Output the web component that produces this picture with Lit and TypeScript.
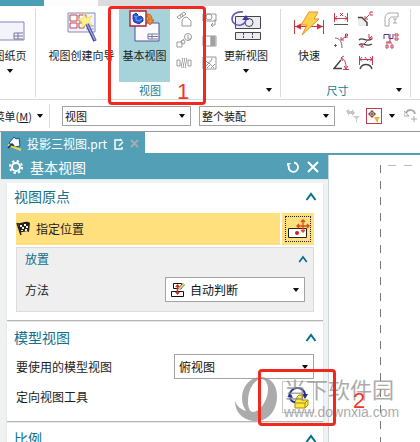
import { LitElement, html, css, svg, nothing } from "lit";
import { customElement, property } from "lit/decorators.js";

const caret = html`<svg class="caret" viewBox="0 0 6 4" width="6" height="4" aria-hidden="true"><path d="M0 0h6L3.5 3.5h-1z" fill="#111" /></svg>`;
const chevron = html`<svg viewBox="0 0 12 9" width="12" height="9" aria-hidden="true"><path d="M1.5 8L6 2l4.500 6" fill="none" stroke="#08708a" stroke-width="2" /></svg>`;

const small = (label: string, body: unknown) => html`<button class="small" aria-label=${label}>
  <svg viewBox="0 0 16 16" width="16" height="16" fill="none">${body}</svg>
</button>`;

const sheetIcon = html`<svg viewBox="0 0 34 32" width="34" height="32" fill="none">
  <path d="M2 12h29v18H2z" fill="#f3f3fc" stroke="#8585bd" />
  <path d="M21 23h9M21 26h9M21 23v6M25 23v6M21 29h9" stroke="#77779b" />
</svg>`;

const wizardIcon = html`<svg viewBox="0 0 30 34" width="30" height="34" fill="none">
  <path d="M1 3h27v19H1z" fill="#f1f2fb" stroke="#8a8ab8" />
  <path d="M3 5h7v6H3zM12 5h7v6h-7zM3 13h7v5H3zM12 13h5v5h-5z" fill="#fff" stroke="#c54450" />
  <path d="M19 16h8M19 19h8M22 16v5" stroke="#9c9cc8" />
  <path d="M17 3l2 5 6-2-3 5 3 4-6-1-4 4 0-6-4-3 5-1z" fill="#fbf28c" stroke="#e7d75c" stroke-width=".6" />
  <path d="M20 14l8 17" stroke="#494b98" stroke-width="3.600" />
  <path d="M20 14l8 16" stroke="#a4a7df" stroke-width="1.400" />
</svg>`;

const baseViewIcon = html`<svg viewBox="0 0 34 34" width="34" height="34" fill="none">
  <path d="M7 13h24v18H7z" fill="#fbfbff" stroke="#504f9d" />
  <path d="M20 24h10M20 26.500h10M20 29h10M20 24v5M24 24v5" stroke="#77779b" />
  <path d="M2 1h16v15H2z" fill="#fff" stroke="#b51d35" stroke-width="1.400" />
  <path d="M5 5l3-2 2 2v2l3-1 2 2v3l-4 3-5-2-1-3z" fill="#2859d8" stroke="#10267d" stroke-width=".8" />
  <path d="M6 6l2 1v3l3 1 3-2M8 7l2-1" stroke="#8fb4ff" stroke-width=".8" />
  <path d="M19 4c4 0 5 2 5 6h2l-4 5-4-5h3c0-2-1-3-2-3z" fill="#f18c2a" stroke="#b4480b" stroke-width=".7" />
</svg>`;

const updateIcon = html`<svg viewBox="0 0 32 32" width="32" height="32" fill="none">
  <path d="M5.500 6.500h25v12h-25zM5.500 22.500h25v7h-25z" fill="#ececf0" stroke="#44444c" />
  <circle cx="19" cy="12.500" r="4" stroke="#44444c" />
  <path d="M13.500 23v7M22.500 23v7" stroke="#44444c" stroke-dasharray="2 1" />
  <path d="M13 2C6 1 2 5 2 9s4 7 9 6c3-1 5-3 5-6" stroke="#6259bd" stroke-width="1.600" />
  <path d="M12 10l4-5 3 5z" fill="#4038a5" />
</svg>`;

const rapidIcon = html`<svg viewBox="0 0 32 32" width="32" height="32" fill="none">
  <path d="M1.500 10v14M30.500 10v14M2 16.500h28" stroke="#c43b48" />
  <path d="M2 16.500l6-3v6zM30 16.500l-6-3v6z" fill="#c92f3d" />
  <path d="M16 2h9l-4 7h5L9 25l5-10h-6z" fill="#ffd34c" stroke="#e88d2b" />
</svg>`;

const G = "#999";
const viewTools = [
  small("投影视图", svg`<path d="M1 6l7-5 2 2-7 5zM6 15v-4c0-3 2-5 5-5l4 4v5z" stroke=${G} /><path d="M4 4l1 2M6 3l1 2" stroke=${G} />`),
  small("局部放大", svg`<path d="M2 3h13v7H2zM4 1v4" stroke=${G} /><circle cx="8" cy="6" r="3" stroke=${G} /><path d="M14 8v6h-4M12 12l-2 2 2 2" stroke=${G} />`),
  small("剖视图", svg`<circle cx="12" cy="4" r="3.500" stroke=${G} /><path d="M1 9h5v5H1zM5 9l3-3M12 2v4h3" stroke=${G} /><circle cx="7" cy="9" r="2" stroke=${G} />`),
  small("断面图", svg`<path d="M2 3h13v10H2z" stroke=${G} /><path d="M9 3h6v10H9z" fill="#bbb" /><path d="M11 3v10M13 3v10" stroke="#888" />`),
  small("断开视图", svg`<path d="M1 5h3v6H1zM12 5h3v6h-3zM6 3c2 3-2 6 0 10M10 3c2 3-2 6 0 10M8 3c2 3-2 6 0 10" stroke=${G} />`),
  small("局部剖", svg`<path d="M2 2h13v12H2z" stroke=${G} /><path d="M3 4l4 4 3-2 1-3M4 12l4-4 5 5M6 13l4-4M10 13l4-4" stroke=${G} />`),
];

const R = "#c43b50";
const sizeTools = [
  small("线性尺寸", svg`<path d="M1.500 2v9M14.500 2v9M2 7.500h12M4 5L2 7.500l2 2M12 5l2 2.500-2 2M7 2l3 3M10 2L7 5" stroke=${R} /><path d="M1 13.500h14" stroke="#555" />`),
  small("倒斜角", svg`<path d="M0 7h5l5 5v3H0z" fill="#ececec" /><path d="M0 6.500h4l5 5V15" stroke="#444" stroke-width="1.400" /><path d="M7 8l4-4M7 5v3h3M15 1h-3v3h3" stroke=${R} />`),
  small("厚度", svg`<path d="M2 15V7c0-3 2-5 5-5h8v4H8L6 8v7z" stroke="#aaa" /><path d="M10 8h4M12 8v4M10 12h4" stroke="#aaa" />`),
  small("径向", svg`<path d="M2 5c4 0 7 3 7 10M1 12.500h3M2.500 11v3" stroke="#666" /><path d="M8 7l4-3M8 4v3h3M12.500 5V1h2v2h-2l2 2" stroke=${R} />`),
  small("坐标", svg`<path d="M1 7c4-4 6 3 13-1M1 12c4-4 6 3 13-1" stroke="#444" stroke-width="1.300" /><path d="M3 14L14 3M3 11v3h3M11 1v4h4" stroke=${R} />`),
  small("周长", svg`<path d="M1 6V1.500h5v4h4V1" stroke="#4b3e91" /><path d="M7 1v8M3 9h5M12 1h3v2h-3zM12 5h3v2h-3zM3 12h2v3H3zM8 12h2v3H8zM3 10h6" stroke=${R} />`),
  small("角度", svg`<path d="M8 5L1 13.500h8" stroke="#444" stroke-width="1.400" /><path d="M8 3c4 1 5 5 5 10M11 1L8 3l2 3M10 14.500h6M11 11l2 3 2-3" stroke=${R} />`),
  small("弧长", svg`<path d="M1.500 1v9M14.500 1v9M2 4.500h12M4 2L2 4.500l2 2M12 2l2 2.500-2 2M7 2l3 4" stroke=${R} /><path d="M2 14c2-6 10-6 12 0" stroke="#444" stroke-width="1.400" />`),
];

@customElement("drop-field")
export class DropField extends LitElement {
  @property() label = "";
  @property() value = "";
  @property({ type: Boolean }) glyph = false;
  @property({ type: Boolean }) large = false;

  static styles = css`
    :host { display: block; min-width: 0; }
    .field { display: grid; align-items: center; height: 20px; font-size: 11px; }
    .field.large { height: 25px; font-size: 12px; }
    .field > * { grid-area: 1 / 1; }
    select {
      appearance: none; width: 100%; height: 100%; margin: 0; padding: 0 16px 0 2px;
      border: 1px solid #a3a3a3; border-radius: 0; background: #fff; color: #111;
      font: inherit; box-sizing: border-box;
    }
    .large select { padding-left: 4px; }
    .glyph select { padding-left: 24px; }
    .caret { justify-self: end; margin-right: 6px; pointer-events: none; }
    .picture { margin-left: 5px; pointer-events: none; }
  `;

  render() {
    return html`<div class="field ${this.large ? "large" : ""} ${this.glyph ? "glyph" : ""}">
      <select aria-label=${this.label}><option>${this.value}</option></select>
      ${this.glyph
        ? html`<svg class="picture" viewBox="0 0 16 16" width="16" height="16" fill="none">
            <path d="M3.500 1.500h8v5h-8zM1.500 9.500h12v5h-12z" fill="#fff" stroke="#111" />
            <path d="M7.500 3v9" stroke="#d52a2a" stroke-width="1.600" />
            <path d="M5 5l2.500-3L10 5zM5 10l2.500 3 2.500-3z" fill="#d52a2a" />
            <path d="M9 7l5-5" stroke="#777" stroke-width="3" /><path d="M9 7l5-5" stroke="#f4e34b" stroke-width="1.500" />
          </svg>`
        : nothing}
      ${caret}
    </div>`;
  }
}

@customElement("app-root")
export class AppRoot extends LitElement {
  static styles = css`
    * { box-sizing: border-box; }
    :host {
      display: flex; flex-direction: column; position: relative; height: 100vh; overflow: hidden;
      background: #fff; color: #1c1c1c;
      font-family: "Noto Sans CJK SC", "Noto Sans", sans-serif; font-size: 12px; line-height: 16px;
    }
    button { margin: 0; padding: 0; border: 0; background: none; color: inherit; font: inherit; }
    svg { display: block; flex: none; }
    h2, h3 { margin: 0; font-weight: 400; }

    .strip { display: flex; height: 6px; flex: none; background: #dcdcdc; }
    .strip .on { width: 44px; background: #4a9fb8; }
    .strip .open { width: 54px; background: #fdfdfd; }

    .ribbon { display: flex; flex: none; height: 94px; padding: 3px 0 2px; border-bottom: 1px solid #d9d9d9; font-size: 11px; }
    .group { display: flex; flex-direction: column; flex: none; border-right: 1px solid #dadada; }
    .group.sheet { width: 36px; overflow: hidden; align-items: flex-end; padding-right: 8px; }
    .group.view { width: 245px; }
    .group.size { width: 130px; }
    .tools { display: flex; height: 73px; }
    .view .tools { padding-left: 8px; }
    .size .tools { padding-left: 8px; }
    .big { display: flex; flex-direction: column; align-items: center; gap: 3px; height: 73px; padding-top: 1px; white-space: nowrap; line-height: 16px; flex: none; }
    .big .art { display: flex; align-items: flex-start; justify-content: center; height: 34px; }
    .big .caret { margin-top: 3px; }
    .wizard { width: 75px; }
    .base { width: 51px; background: #a6d3da; }
    .update { width: 52px; }
    .rapid { width: 40px; }
    .grid { display: grid; grid-auto-rows: 16px; row-gap: 6px; padding-top: 2px; align-content: start; }
    .view .grid { grid-template-columns: 16px 16px; column-gap: 9px; margin: 0 3px 0 6px; }
    .size .grid { grid-template-columns: repeat(3, 16px); column-gap: 9px; margin-left: 4px; }
    .small { width: 16px; height: 16px; }
    .foot { display: grid; grid-template-columns: 1fr auto 1fr; align-items: center; height: 16px; padding-right: 8px; color: #137c96; }
    .foot .name { grid-column: 2; padding-right: 8px; }
    .foot .caret { justify-self: end; }

    .bar { display: flex; align-items: center; flex: none; height: 32px; border-bottom: 1px solid #979797; font-size: 11px; }
    .menu { display: flex; align-items: center; justify-content: flex-end; gap: 5px; width: 50px; height: 24px; padding-right: 6px; border-right: 1px solid #dadada; white-space: nowrap; flex: none; }
    .bar .scope { width: 133px; margin-left: 12px; }
    .bar .assembly { width: 140px; margin-left: 8px; }
    .bar .filters { display: flex; align-items: center; gap: 5px; margin-left: 10px; }
    .snap { border: 1px solid #bd3a50; }
    .filters .caret { margin: 0 4px 0 2px; }

    .tabs { display: flex; flex: none; height: 23px; border-bottom: 2px solid #529fb6; }
    .tab { display: flex; align-items: center; width: 145px; height: 23px; padding-left: 6px; background: #529fb6; color: #fff; border-left: 1px solid #e8eef0; }
    .tab .title { margin-left: 4px; margin-right: 7px; white-space: nowrap; }
    .tab .shut { margin-left: 6px; }

    .work { display: flex; flex: 1; min-height: 0; }
    .panel { display: flex; flex-direction: column; flex: 0 1 329px; min-width: 0; overflow: hidden; border-right: 1px solid #cbd5d9; background: #f0f1f1; }
    .head { display: flex; align-items: center; flex: none; height: 24px; padding: 0 8px; background: #529fb6; color: #fff; border-left: 1px solid #e8eef0; }
    .head h2 { flex: 1; margin-left: 7px; font-size: 14px; line-height: 20px; }
    .head .pair { display: flex; gap: 6px; }
    .cards { display: flex; flex-direction: column; gap: 2px; flex: none; padding: 3px 5px 0 7px; border-top: 1px solid #d9edf6; }
    .card { padding: 0 9px; background: #fff; box-shadow: 0 1px 1px #b5b5b5; }
    .card .top { display: flex; align-items: center; justify-content: space-between; height: 30px; margin: 0 -3px 0 -2px; color: #11708b; }
    .card .top h3 { font-size: 14px; line-height: 20px; }
    .origin { padding-bottom: 8px; }
    .origin .top { padding-bottom: 4px; }
    .pick { display: flex; gap: 2px; height: 32px; }
    .pick .bar-label { display: flex; align-items: center; gap: 6px; flex: 1; background: #ffe07c; }
    .pick .spot { width: 32px; background: #ffe07c; padding: 3px; }
    .spot .ring { display: grid; place-items: center; height: 26px; border: 1px dotted #222; }
    .place { margin-top: 2px; padding: 0 8px; height: 65px; border: 1px solid #dcdcdc; background: #efefef; }
    .place .sub { display: flex; align-items: center; justify-content: space-between; height: 22px; margin-right: -3px; color: #11708b; }
    .place .sub h3 { font-size: 12px; }
    .row { display: flex; align-items: center; justify-content: space-between; height: 25px; white-space: nowrap; }
    .place .row { margin-top: 7px; }
    .row drop-field { flex: 0 1 140px; }
    .model .row { margin-top: 2px; }
    .model .row + .row { height: 32px; }
    .model { padding-bottom: 8px; }
    .orient { width: 32px; height: 32px; border: 1px solid #c9c9c9; display: grid; place-items: center; }

    .sheet-area { flex: 1; display: grid; padding: 10px 0 0 51px; }
    .page {
      background:
        repeating-linear-gradient(to bottom, #777 0 8px, transparent 8px 16px) 0 0 / 1px 100% no-repeat,
        repeating-linear-gradient(to right, #bbb 0 8px, transparent 8px 16px) 8px 0 / 100% 1px no-repeat;
    }

    .mark { position: absolute; border: 3px solid #f2281e; border-radius: 4px; pointer-events: none; }
    .mark.one { left: 108px; top: 6px; width: 98px; height: 99px; }
    .mark.two { left: 258px; top: 369px; width: 78px; height: 57px; }
    .num { position: absolute; color: #f5362b; font-family: "Liberation Sans", sans-serif; font-size: 22px; line-height: 22px; }
    .num.one { left: 177px; top: 81px; }
    .num.two { left: 353px; top: 390px; }
    .credit { position: absolute; left: 234px; top: 376px; display: flex; align-items: flex-start; gap: 6px; color: #8c8c8c; opacity: .72; pointer-events: none; white-space: nowrap; }
    .credit .site { font-size: 22px; line-height: 24px; }
    .credit .url { font-family: "Liberation Sans", sans-serif; font-size: 14px; line-height: 24px; }
  `;

  render() {
    return html`
      <div class="strip"><span class="on"></span><span class="open"></span></div>

      <div class="ribbon">
        <section class="group sheet">
          <button class="big"><span class="art">${sheetIcon}</span>图纸页${caret}</button>
        </section>
        <section class="group view">
          <div class="tools">
            <button class="big wizard"><span class="art">${wizardIcon}</span>视图创建向导</button>
            <button class="big base"><span class="art">${baseViewIcon}</span>基本视图</button>
            <div class="grid">${viewTools}</div>
            <button class="big update"><span class="art">${updateIcon}</span>更新视图${caret}</button>
          </div>
          <div class="foot"><span class="name">视图</span>${caret}</div>
        </section>
        <section class="group size">
          <div class="tools">
            <button class="big rapid"><span class="art">${rapidIcon}</span>快速</button>
            <div class="grid">${sizeTools}</div>
          </div>
          <div class="foot"><span class="name">尺寸</span>${caret}</div>
        </section>
      </div>

      <div class="bar">
        <button class="menu"><span>菜单(<u>M</u>)</span>${caret}</button>
        <drop-field class="scope" label="类型过滤器" value="视图"></drop-field>
        <drop-field class="assembly" label="选择范围" value="整个装配"></drop-field>
        <div class="filters">
          <button aria-label="重置过滤器">
            <svg viewBox="0 0 16 16" width="16" height="16"><path d="M1 3l3-2v2h3V1l3 4-3 3V6H4v2z" fill="#c6c6c6" /><path d="M8 8h7l-3 3v4l-1-1v-3z" fill="#ccc" /></svg>
          </button>
          <button class="snap" aria-label="捕捉过滤器">
            <svg viewBox="0 0 14 14" width="14" height="14" fill="none"><circle cx="5" cy="5" r="2.500" stroke="#7a4038" /><path d="M5 1v8M1 5h8" stroke="#7a4038" /><path d="M7 8h6l-2 3v3l-2-2z" fill="#f2b233" /></svg>
          </button>
          ${caret}
          <button aria-label="撤销选择">
            <svg viewBox="0 0 16 16" width="16" height="16" fill="none"><path d="M2 5c2-4 8-4 9 1" stroke="#aaa" stroke-width="2" /><path d="M0 3v5h5zM7 11h6M10 8v6" stroke="#aaa" /></svg>
          </button>
        </div>
      </div>

      <div class="tabs">
        <div class="tab">
          <svg viewBox="0 0 16 16" width="16" height="16" fill="none"><path d="M2 7l5-6 2 2 3-1 1 8-5 1z" fill="#f6fbff" stroke="#174c96" /><path d="M1 9l13 5" stroke="#f0d44b" stroke-width="2" /><path d="M1 12l4-4 2 2" stroke="#132d5a" stroke-width="1.500" /></svg>
          <span class="title">投影三视图.prt</span>
          <svg viewBox="0 0 10 12" width="10" height="12" fill="none"><path d="M7 2H1v9h7V9M6 1l2 2M5 8l4-4" stroke="#fff" stroke-width="1.500" /></svg>
          <button class="shut" aria-label="关闭标签">
            <svg viewBox="0 0 9 9" width="9" height="9"><path d="M1 1l7 7M8 1L1 8" stroke="#a9abad" stroke-width="1.800" /></svg>
          </button>
        </div>
      </div>

      <div class="work">
        <aside class="panel">
          <header class="head">
            <svg viewBox="0 0 14 14" width="14" height="14" fill="none"><circle cx="7" cy="7" r="4" stroke="#fff" stroke-width="2" /><circle cx="7" cy="7" r="6" stroke="#fff" stroke-width="2" stroke-dasharray="2.350 2.360" /></svg>
            <h2>基本视图</h2>
            <div class="pair">
              <button aria-label="重置"><svg viewBox="0 0 14 14" width="14" height="14" fill="none"><path d="M8 2.500a4.700 4.700 0 1 1-5 3" stroke="#fff" stroke-width="1.800" /><path d="M1 6.500V3h4.500z" fill="#fff" /></svg></button>
              <button aria-label="关闭"><svg viewBox="0 0 14 14" width="14" height="14"><path d="M2 2l10 10M12 2L2 12" stroke="#fff" stroke-width="2" /></svg></button>
            </div>
          </header>

          <div class="cards">
            <section class="card origin">
              <div class="top"><h3>视图原点</h3>${chevron}</div>
              <div class="pick">
                <div class="bar-label">
                  <svg viewBox="0 0 14 16" width="14" height="16" fill="none"><path d="M1 2l4 12" stroke="#222" stroke-width="1.500" /><path d="M2 2c4 1 7-3 12 0l-1 9c-3-2-6 1-9 0z" fill="#222" /><path d="M4 4h2v2H4zM8 3h2v2H8zM6 6h2v2H6zM10 5h2v2h-2zM5 9h2v1H5zM9 8h2v2H9z" fill="#f7f3df" /></svg>
                  指定位置
                </div>
                <button class="spot" aria-label="指定位置">
                  <span class="ring"><svg viewBox="0 0 24 22" width="24" height="22" fill="none"><path d="M2.500 10.500h18v9h-18z" fill="#fff" stroke="#222" /><circle cx="11" cy="15" r="2" fill="#d01f1f" /><path d="M17 2v12M11 8h12M15 4l2-2 2 2M15 12l2 2 2-2M13 6l-2 2 2 2M21 6l2 2-2 2" stroke="#dc4a19" stroke-width="1.300" /></svg></span>
                </button>
              </div>
              <div class="place">
                <div class="sub"><h3>放置</h3><svg viewBox="0 0 12 9" width="10" height="8"><path d="M1.500 8L6 2l4.500 6" fill="none" stroke="#08708a" stroke-width="2" /></svg></div>
                <div class="row"><span>方法</span><drop-field large glyph label="方法" value="自动判断"></drop-field></div>
              </div>
            </section>

            <section class="card model">
              <div class="top"><h3>模型视图</h3>${chevron}</div>
              <div class="row"><span>要使用的模型视图</span><drop-field large label="要使用的模型视图" value="俯视图"></drop-field></div>
              <div class="row">
                <span>定向视图工具</span>
                <button class="orient" aria-label="定向视图工具">
                  <svg viewBox="0 0 24 24" width="24" height="24" fill="none"><path d="M9 17l2-5 2-2h4l-1 5h6v5l-3 3H9z" fill="#ffe93b" stroke="#a38b15" /><path d="M9 18h10v5M19 18l3-3" stroke="#a38b15" /><path d="M3 12c0-5 4-9 8-9 4 0 7 2 8 6M4 13c1 3 3 4 5 4" stroke="#23308a" stroke-width="2" /><path d="M1 12l4-3 2 4zM16 9h6l-3 5z" fill="#23308a" /></svg>
                </button>
              </div>
            </section>

            <section class="card">
              <div class="top"><h3>比例</h3>${chevron}</div>
            </section>
          </div>
        </aside>
        <div class="sheet-area"><div class="page"></div></div>
      </div>

      <div class="credit">
        <svg viewBox="0 0 44 46" width="44" height="46"><path fill-rule="evenodd" d="M26 1C14 2 8 12 8 22c0 6 2 10 4 13C6 33 3 30 1 25 1 37 10 45 22 45 35 45 43 34 43 20 43 8 36 1 26 1zM25 3C17 8 14 16 14 26c0 6 2 10 5 10 7 0 15-12 15-23 0-7-4-11-9-10z" fill="currentColor" /></svg>
        <div><div class="site">当下软件园</div><div class="url">www.downxia.com</div></div>
      </div>
      <div class="mark one"></div><span class="num one">1</span>
      <div class="mark two"></div><span class="num two">2</span>
    `;
  }
}
